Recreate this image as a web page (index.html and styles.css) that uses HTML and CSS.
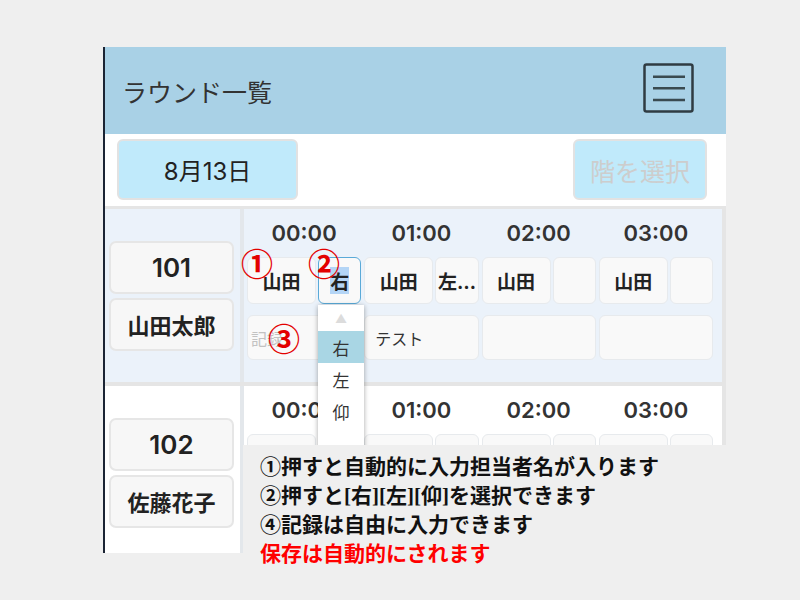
FILE: index.html
```html
<!DOCTYPE html>
<html>

<head>
	<meta charset="utf-8">
	<title>ラウンド一覧</title>
	<link rel="stylesheet" href="styles.css">
</head>

<body>
	<div class="canvas">
		<div class="screen">
			<header class="topbar">
				<h1 class="title">ラウンド一覧</h1>
				<svg class="menu" viewBox="0 0 51 50" width="51" height="50">
					<rect x="1.5" y="1.5" width="48" height="47" rx="2" fill="none" stroke="#2f3b42" stroke-width="2.5"/>
					<path d="M10 13.7H42M10 25.3H42M10 37H42" stroke="#3a4a50" stroke-width="2.4"/>
				</svg>
			</header>

			<div class="toolbar">
				<div class="tool-btn date">8月13日</div>
				<div class="tool-btn floor">階を選択</div>
			</div>

			<section class="room room-odd">
				<div class="room-side">
					<div class="room-tag room-no">101</div>
					<div class="room-tag room-name">山田太郎</div>
				</div>
				<div class="room-main">
					<div class="hours">
						<div>00:00</div>
						<div>01:00</div>
						<div>02:00</div>
						<div>03:00</div>
					</div>
					<div class="slots">
						<div class="slot">
							<div class="cell">山田</div>
							<div class="cell open">
								<span class="sel">右</span>
								<div class="picker">
									<div class="picker-up">▲</div>
									<div class="picker-item on">右</div>
									<div class="picker-item">左</div>
									<div class="picker-item">仰</div>
								</div>
							</div>
						</div>
						<div class="slot">
							<div class="cell">山田</div>
							<div class="cell">左…</div>
						</div>
						<div class="slot">
							<div class="cell">山田</div>
							<div class="cell"></div>
						</div>
						<div class="slot">
							<div class="cell">山田</div>
							<div class="cell"></div>
						</div>
					</div>
					<div class="notes">
						<div class="cell memo hint">記録</div>
						<div class="cell memo">テスト</div>
						<div class="cell memo"></div>
						<div class="cell memo"></div>
					</div>
				</div>
			</section>

			<section class="room">
				<div class="room-side">
					<div class="room-tag room-no">102</div>
					<div class="room-tag room-name">佐藤花子</div>
				</div>
				<div class="room-main">
					<div class="hours">
						<div>00:00</div>
						<div>01:00</div>
						<div>02:00</div>
						<div>03:00</div>
					</div>
					<div class="slots">
						<div class="slot">
							<div class="cell"></div>
							<div class="cell"></div>
						</div>
						<div class="slot">
							<div class="cell"></div>
							<div class="cell"></div>
						</div>
						<div class="slot">
							<div class="cell"></div>
							<div class="cell"></div>
						</div>
						<div class="slot">
							<div class="cell"></div>
							<div class="cell"></div>
						</div>
					</div>
				</div>
			</section>
		</div>

		<div class="mark mark-1">①</div>
		<div class="mark mark-2">②</div>
		<div class="mark mark-3">③</div>

		<div class="note">
			<p>①押すと自動的に入力担当者名が入ります</p>
			<p>②押すと[右][左][仰]を選択できます</p>
			<p>④記録は自由に入力できます</p>
			<p class="warn">保存は自動的にされます</p>
		</div>
	</div>
</body>

</html>
```

FILE: styles.css
```css
body {
	margin: 0;
	background: #efefef;
	font-family: "Inter", "Noto Sans CJK JP", sans-serif;
}

.canvas {
	position: relative;
	width: 800px;
	height: 600px;
	overflow: hidden;
	padding: 47px 0 0 103px;
	box-sizing: border-box;
}

.screen {
	width: 623px;
	height: 506px;
	overflow: hidden;
	border-left: 2px solid #1b2434;
	background: #fff;
	box-sizing: border-box;
}

.topbar {
	height: 87px;
	background: #a9d1e6;
	display: flex;
	align-items: center;
	justify-content: space-between;
	padding: 0 32px 0 17px;
}

.title {
	margin: 0;
	font-size: 25px;
	font-weight: 400;
	color: #333;
}

.menu {
	display: block;
	margin-top: -6px;
}

.toolbar {
	height: 75px;
	display: flex;
	justify-content: space-between;
	align-items: flex-start;
	padding: 5px 19px 0 12px;
	border-bottom: 3px solid #e5e5e5;
	box-sizing: border-box;
}

.tool-btn {
	width: 181px;
	height: 61px;
	box-sizing: border-box;
	border: 2px solid #e2e2e2;
	border-radius: 6px;
	background: #c0eafb;
	display: flex;
	align-items: center;
	justify-content: center;
	font-size: 24px;
	color: #222;
}

.floor {
	width: 134px;
	font-size: 25px;
	color: #cdcdcd;
}

.room {
	display: flex;
	height: 173px;
	border-right: 4px solid #e5e5e5;
}

.room + .room {
	border-top: 4px solid #e5e5e5;
}

.room-odd {
	background: #ebf2fa;
}

.room-side {
	width: 139px;
	flex: none;
	border-right: 4px solid #e3e7eb;
	display: flex;
	flex-direction: column;
	justify-content: center;
	gap: 4px;
	padding: 0 6px 0 4px;
	box-sizing: border-box;
}

.room-tag {
	height: 53px;
	border: 2px solid #e6e6e6;
	border-radius: 7px;
	background: #f7f7f7;
	display: flex;
	align-items: center;
	justify-content: center;
	box-sizing: border-box;
	font-weight: 700;
	color: #222;
}

.room-no {
	font-size: 26px;
	font-weight: 600;
}

.room-name {
	font-size: 22px;
}

.room-main {
	flex: 1;
	padding: 0 9px 0 3px;
}

.hours,
.slots,
.notes {
	display: grid;
	grid-template-columns: repeat(4, 1fr);
	gap: 3px;
}

.hours {
	height: 48px;
	align-items: center;
	text-align: center;
	font-size: 22px;
	font-weight: 600;
	color: #333;
}

.slots {
	height: 47px;
}

.slot {
	display: grid;
	grid-template-columns: 1.6fr 1fr;
	gap: 2px;
}

.cell {
	border: 1px solid #e7eaed;
	border-radius: 6px;
	background: #f9f9f9;
	box-sizing: border-box;
	display: flex;
	align-items: center;
	justify-content: center;
	font-size: 19px;
	font-weight: 700;
	color: #222;
	white-space: nowrap;
	overflow: hidden;
}

.cell.open {
	position: relative;
	overflow: visible;
	border-color: #5aaad8;
}

.sel {
	background: #b4d5f6;
}

.picker {
	position: absolute;
	top: calc(100% + 2px);
	left: -1px;
	width: 46px;
	height: 170px;
	background: #fff;
	box-shadow: 0 1px 5px rgba(0, 0, 0, 0.35);
	font-size: 17px;
	font-weight: 400;
	color: #333;
	z-index: 2;
}

.picker-up {
	height: 26px;
	display: flex;
	align-items: center;
	justify-content: center;
	font-size: 12px;
	color: #dcdcdc;
}

.picker-item {
	height: 32px;
	display: flex;
	align-items: center;
	justify-content: center;
}

.picker-item.on {
	background: #a9d6e4;
}

.notes {
	margin-top: 11px;
	height: 45px;
}

.memo {
	justify-content: flex-start;
	padding-left: 10px;
	font-size: 16px;
	font-weight: 400;
	color: #333;
}

.memo.hint {
	padding-left: 3px;
	color: #c2c2c2;
}

.mark {
	position: absolute;
	font-family: "Noto Sans CJK JP", serif;
	font-size: 32px;
	line-height: 32px;
	font-weight: 700;
	color: #e30000;
	z-index: 3;
}

.mark-1 {
	left: 241px;
	top: 246px;
}

.mark-2 {
	left: 308px;
	top: 246px;
}

.mark-3 {
	left: 268px;
	top: 321px;
}

.note {
	position: absolute;
	left: 243px;
	top: 445px;
	right: 0;
	bottom: 0;
	background: #efefef;
	padding: 8px 0 0 17px;
	font-family: "Liberation Serif", "Noto Sans CJK JP", serif;
	font-size: 21px;
	line-height: 29px;
	font-weight: 700;
	color: #111;
	z-index: 5;
}

.note p {
	margin: 0;
}

.warn {
	color: #f00;
}
```
